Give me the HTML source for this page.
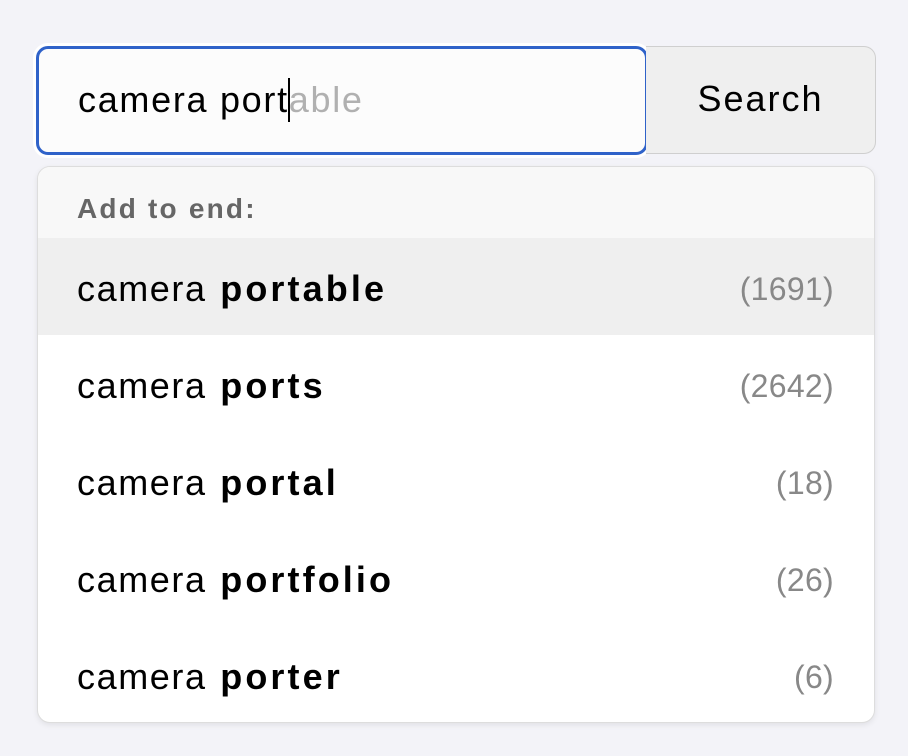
<!DOCTYPE html>
<html><head><style>
*{box-sizing:border-box;margin:0;padding:0}
body{width:908px;height:756px;background:#f3f3f8;font-family:"Liberation Sans",Arial,sans-serif;position:relative;overflow:hidden}
.inp{position:absolute;left:36px;top:46px;width:612px;height:109px;border:3px solid #2f62c9;border-radius:12px;background:#fcfcfc;box-shadow:0 0 0 3px #fff;}
.inp span{position:absolute;left:39px;top:29px;font-size:36px;letter-spacing:1.7px;color:#000;white-space:nowrap}
.inp .g{color:#b0b0b0}
.caret{display:inline-block;width:2px;height:44px;background:#000;vertical-align:-10px;margin:0 -1px}
.btn{position:absolute;left:646px;top:46px;width:230px;height:108px;background:#efefef;border:1.5px solid #cfcfcf;border-left:none;border-radius:0 12px 12px 0;font-size:36px;letter-spacing:2px;text-align:center;line-height:104px;color:#000}
.dd{position:absolute;left:37px;top:166px;width:838px;height:557px;background:#fff;border:1.5px solid #ddd;border-radius:13px;overflow:hidden;box-shadow:0 2px 6px rgba(0,0,0,.08)}
.hd{height:71px;background:#f8f8f8;color:#666;font-weight:bold;font-size:28px;letter-spacing:2.2px;padding:26px 0 0 39px}
.row{height:97px;position:relative;font-size:36px}
.row.sel{background:#efefef}
.row .t{position:absolute;left:39px;top:30px;letter-spacing:1.6px}
.row .t b{letter-spacing:3.1px;margin-left:2px}
.row .c{position:absolute;right:40px;top:33px;color:#888;font-size:32px;letter-spacing:.3px}
</style></head><body>
<div class="inp"><span>camera port<i class="caret"></i><b class="g" style="font-weight:normal">able</b></span></div>
<div class="btn">Search</div>
<div class="dd">
<div class="hd">Add to end:</div>
<div class="row sel"><span class="t">camera <b>portable</b></span><span class="c">(1691)</span></div>
<div class="row"><span class="t">camera <b>ports</b></span><span class="c">(2642)</span></div>
<div class="row"><span class="t">camera <b>portal</b></span><span class="c">(18)</span></div>
<div class="row"><span class="t">camera <b>portfolio</b></span><span class="c">(26)</span></div>
<div class="row"><span class="t">camera <b>porter</b></span><span class="c">(6)</span></div>
</div>
</body></html>
